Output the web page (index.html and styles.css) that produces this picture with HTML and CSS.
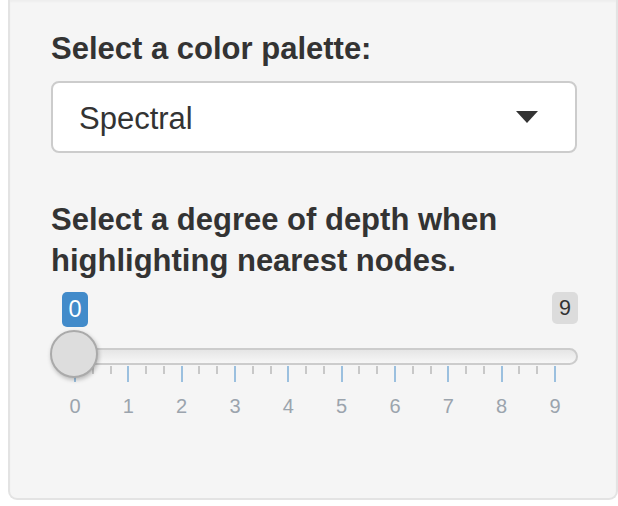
FILE: index.html
```html
<!DOCTYPE html>
<html>
<head>
<meta charset="utf-8">
<link rel="stylesheet" href="styles.css">
</head>
<body>
<div class="well">
  <div class="form-group first">
    <label class="control-label">Select a color palette:</label>
    <div class="select">
      <span class="select-value">Spectral</span>
      <svg class="caret" width="22" height="12" viewBox="0 0 22 12"><path d="M0 0 L22 0 L11 12 Z" fill="#333"/></svg>
    </div>
  </div>
  <div class="form-group">
    <label class="control-label">Select a degree of depth when highlighting nearest nodes.</label>
    <div class="irs">
      <span class="irs-single">0</span>
      <span class="irs-max">9</span>
      <span class="irs-line"></span>
      <span class="irs-edge"></span>
      <span class="irs-grid-small"></span>
      <span class="irs-grid-big"></span>
      <div class="irs-grid-text">
        <span>0</span><span>1</span><span>2</span><span>3</span><span>4</span><span>5</span><span>6</span><span>7</span><span>8</span><span>9</span>
      </div>
      <span class="irs-slider"></span>
    </div>
  </div>
</div>
</body>
</html>
```
FILE: styles.css
```css
html, body {
  margin: 0;
  padding: 0;
  background: #ffffff;
}
body {
  font-family: "Liberation Sans", Arial, Helvetica, sans-serif;
  color: #333333;
}
.well {
  margin-left: 8px;
  width: 526px;
  padding: 28px 39px 78px 41px;
  background: #f5f5f5;
  border: 2px solid #e3e3e3;
  border-top: none;
  border-radius: 0 0 9px 9px;
  box-shadow: inset 0 2px 2px rgba(0,0,0,0.03);
}
.control-label {
  display: block;
  font-weight: bold;
  font-size: 31px;
  line-height: 41px;
  margin-bottom: 12px;
}
.form-group.first {
  margin-bottom: 46px;
}
.form-group .control-label {
  margin-bottom: 11px;
}
.form-group.first .control-label {
  margin-bottom: 12px;
}
.select {
  height: 72px;
  box-sizing: border-box;
  border: 2px solid #cccccc;
  border-radius: 8px;
  background: #ffffff;
  display: flex;
  align-items: center;
  justify-content: space-between;
  padding: 0 37px 0 26px;
}
.select-value {
  font-size: 31px;
  line-height: 64px;
  padding-top: 4px;
  color: #333333;
}
.caret {
  display: block;
  margin-top: -1px;
}
.irs {
  position: relative;
  height: 128px;
}
.irs-single {
  position: absolute;
  left: 11px;
  top: 0;
  width: 26px;
  height: 35px;
  box-sizing: border-box;
  padding-top: 2px;
  background: #428bca;
  color: #ffffff;
  border-radius: 5px;
  font-size: 23.5px;
  line-height: 31px;
  text-align: center;
}
.irs-max {
  position: absolute;
  right: -1px;
  top: 0;
  width: 26px;
  height: 32px;
  box-sizing: border-box;
  padding-top: 2px;
  background: rgba(0,0,0,0.1);
  color: #333333;
  border-radius: 5px;
  font-size: 21.5px;
  line-height: 28px;
  text-align: center;
}
.irs-line {
  position: absolute;
  left: 1px;
  right: -1px;
  top: 56px;
  height: 17px;
  box-sizing: border-box;
  border: 2px solid #cccccc;
  border-radius: 17px;
  background: linear-gradient(to bottom, #dddddd -50%, #ffffff 150%);
}
.irs-edge {
  position: absolute;
  left: 0;
  top: 63px;
  width: 10px;
  height: 6px;
  background: #428bca;
  border-radius: 4px 0 0 4px;
}
.irs-grid-small {
  position: absolute;
  left: 23px;
  top: 74px;
  width: 483px;
  height: 8px;
  background: repeating-linear-gradient(to right, #c8c8c8 0, #c8c8c8 2px, transparent 2px, transparent 17.778px);
}
.irs-grid-big {
  position: absolute;
  left: 23px;
  top: 74px;
  width: 483px;
  height: 16px;
  background: repeating-linear-gradient(to right, #9bc0df 0, #9bc0df 2px, transparent 2px, transparent 53.333px);
}
.irs-grid-text {
  position: absolute;
  left: -2.67px;
  top: 104px;
  width: 533.33px;
  display: flex;
  font-size: 20px;
  line-height: 20px;
  color: #9ba4ad;
}
.irs-grid-text span {
  flex: 1;
  text-align: center;
}
.irs-slider {
  position: absolute;
  left: -1px;
  top: 38px;
  width: 48px;
  height: 48px;
  box-sizing: border-box;
  border: 2px solid #aaaaaa;
  background: #dddddd;
  border-radius: 50%;
  box-shadow: 1px 2px 4px rgba(0,0,0,0.25);
}
```
